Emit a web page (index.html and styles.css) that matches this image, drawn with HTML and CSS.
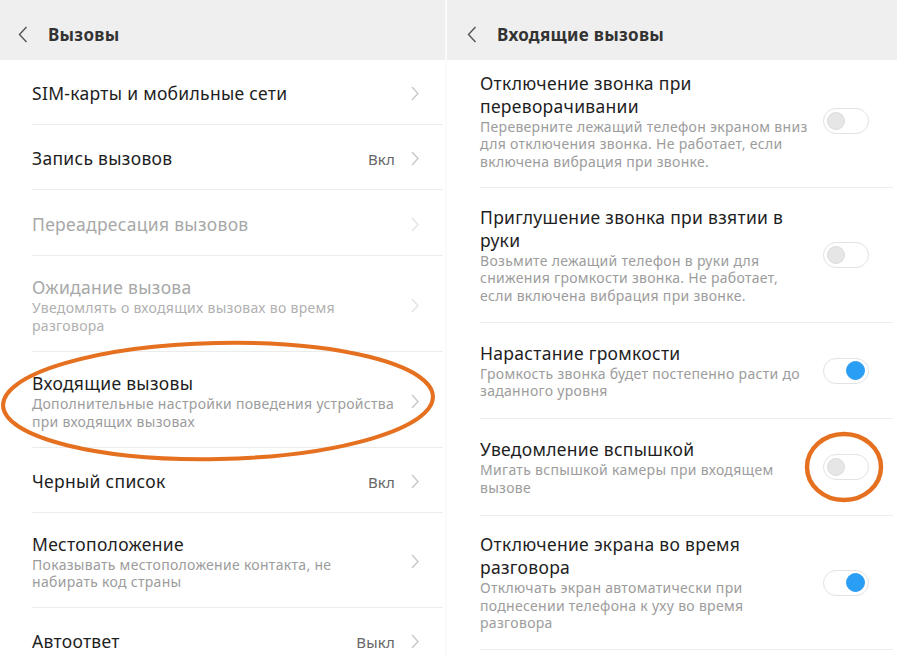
FILE: index.html
```
<!DOCTYPE html>
<html lang="ru">
<head>
<meta charset="utf-8">
<title>Вызовы</title>
<link rel="stylesheet" href="styles.css">
</head>
<body>
<div class="screen">
  <section class="panel panel-left">
    <header class="bar">
      <svg class="back" width="10" height="17" viewBox="0 0 10 17"><path d="M8.5 1 L1.5 8.5 L8.5 16" fill="none" stroke="#555" stroke-width="1.4"/></svg>
      <h1 class="bar-title">Вызовы</h1>
    </header>
    <ul class="list">
      <li class="row h65"><div class="text"><div class="title">SIM-карты и мобильные сети</div></div><svg class="chev" width="8" height="15" viewBox="0 0 8 15"><path d="M1 1 L7 7.5 L1 14" fill="none" stroke="#c6c6c6" stroke-width="1.3"/></svg></li>
      <li class="row h65"><div class="text"><div class="title">Запись вызовов</div></div><span class="value">Вкл</span><svg class="chev" width="8" height="15" viewBox="0 0 8 15"><path d="M1 1 L7 7.5 L1 14" fill="none" stroke="#c6c6c6" stroke-width="1.3"/></svg></li>
      <li class="row h66 disabled"><div class="text"><div class="title">Переадресация вызовов</div></div><svg class="chev" width="8" height="15" viewBox="0 0 8 15"><path d="M1 1 L7 7.5 L1 14" fill="none" stroke="#e2e2e2" stroke-width="1.3"/></svg></li>
      <li class="row h96 disabled"><div class="text"><div class="title">Ожидание вызова</div><div class="sub">Уведомлять о входящих вызовах во время разговора</div></div><svg class="chev" width="8" height="15" viewBox="0 0 8 15"><path d="M1 1 L7 7.5 L1 14" fill="none" stroke="#e2e2e2" stroke-width="1.3"/></svg></li>
      <li class="row h96"><div class="text"><div class="title">Входящие вызовы</div><div class="sub">Дополнительные настройки поведения устройства при входящих вызовах</div></div><svg class="chev" width="8" height="15" viewBox="0 0 8 15"><path d="M1 1 L7 7.5 L1 14" fill="none" stroke="#c6c6c6" stroke-width="1.3"/></svg></li>
      <li class="row h65"><div class="text"><div class="title">Черный список</div></div><span class="value">Вкл</span><svg class="chev" width="8" height="15" viewBox="0 0 8 15"><path d="M1 1 L7 7.5 L1 14" fill="none" stroke="#c6c6c6" stroke-width="1.3"/></svg></li>
      <li class="row h95"><div class="text"><div class="title">Местоположение</div><div class="sub">Показывать местоположение контакта, не набирать код страны</div></div><svg class="chev" width="8" height="15" viewBox="0 0 8 15"><path d="M1 1 L7 7.5 L1 14" fill="none" stroke="#c6c6c6" stroke-width="1.3"/></svg></li>
      <li class="row h65"><div class="text"><div class="title">Автоответ</div></div><span class="value">Выкл</span><svg class="chev" width="8" height="15" viewBox="0 0 8 15"><path d="M1 1 L7 7.5 L1 14" fill="none" stroke="#c6c6c6" stroke-width="1.3"/></svg></li>
    </ul>
  </section>
  <div class="sep"></div>
  <section class="panel panel-right">
    <header class="bar">
      <svg class="back" width="10" height="17" viewBox="0 0 10 17"><path d="M8.5 1 L1.5 8.5 L8.5 16" fill="none" stroke="#555" stroke-width="1.4"/></svg>
      <h1 class="bar-title">Входящие вызовы</h1>
    </header>
    <ul class="list">
      <li class="row h128 lift"><div class="text"><div class="title">Отключение звонка при переворачивании</div><div class="sub">Переверните лежащий телефон экраном вниз для отключения звонка. Не работает, если включена вибрация при звонке.</div></div><span class="toggle"><span class="knob"></span></span></li>
      <li class="row h135"><div class="text"><div class="title">Приглушение звонка при взятии в руки</div><div class="sub">Возьмите лежащий телефон в руки для снижения громкости звонка. Не работает, если включена вибрация при звонке.</div></div><span class="toggle"><span class="knob"></span></span></li>
      <li class="row h96"><div class="text"><div class="title">Нарастание громкости</div><div class="sub">Громкость звонка будет постепенно расти до заданного уровня</div></div><span class="toggle on"><span class="knob"></span></span></li>
      <li class="row h97"><div class="text"><div class="title">Уведомление вспышкой</div><div class="sub">Мигать вспышкой камеры при входящем вызове</div></div><span class="toggle"><span class="knob"></span></span></li>
      <li class="row h134"><div class="text"><div class="title">Отключение экрана во время разговора</div><div class="sub">Отключать экран автоматически при поднесении телефона к уху во время разговора</div></div><span class="toggle on"><span class="knob"></span></span></li>
    </ul>
  </section>
  <svg class="mark mark-left" width="442" height="132" viewBox="0 0 442 132"><ellipse cx="218" cy="66" rx="215" ry="58" transform="rotate(-1.2 218 66)" fill="none" stroke="#e5701f" stroke-width="4"/></svg>
  <svg class="mark mark-right" width="84" height="76" viewBox="0 0 84 76"><ellipse cx="42" cy="38" rx="37" ry="33" fill="none" stroke="#e5701f" stroke-width="4.5"/></svg>
</div>
</body>
</html>
```
FILE: styles.css
```
* { box-sizing: border-box; }
html, body { margin: 0; padding: 0; }
body {
  width: 897px;
  height: 656px;
  overflow: hidden;
  background: #fff;
  font-family: "Noto Sans", Roboto, "Liberation Sans", sans-serif;
}
.screen {
  position: relative;
  display: flex;
  width: 897px;
  height: 656px;
  overflow: hidden;
}
.panel { background: #fff; overflow: hidden; }
.panel-left { width: 445px; }
.panel-right { width: 450px; }
.sep { width: 2px; background: #fafafa; }
.bar {
  height: 60px;
  background: #efefef;
  display: flex;
  align-items: center;
  padding-top: 8px;
  padding-left: 18px;
  gap: 20px;
}
.panel-right .bar { padding-left: 20px; gap: 20px; }
.back { display: block; }
.bar-title {
  margin: 0;
  font-size: 17px;
  font-weight: 700;
  letter-spacing: 0.3px;
  color: #333;
}
.list { list-style: none; margin: 0; padding: 0; }
.row {
  display: flex;
  align-items: center;
  margin-left: 32px;
  margin-right: 2px;
  padding-top: 3px;
  padding-right: 24px;
  border-bottom: 1px solid #ececec;
}
.panel-right .row { margin-left: 33px; margin-right: 4px; padding-right: 24px; padding-top: 0; }
.panel-right .row.lift { padding-bottom: 5px; }
.h65 { height: 65px; }
.h66 { height: 66px; }
.h95 { height: 95px; }
.h96 { height: 96px; }
.h97 { height: 97px; }
.h128 { height: 128px; }
.h134 { height: 134px; }
.h135 { height: 135px; }
.text { flex: 1; min-width: 0; }
.title {
  font-size: 17.5px;
  line-height: 23px;
  letter-spacing: 0.3px;
  color: #1e1e1e;
}
.sub {
  font-size: 14px;
  line-height: 17.5px;
  letter-spacing: 0.3px;
  color: #9c9c9c;
  max-width: 365px;
}
.panel-right .sub { max-width: 331px; }
.panel-right .title { max-width: 312px; }
.disabled .title { color: #a8a8a8; }
.disabled .sub { color: #b0b0b0; }
.value {
  font-size: 15px;
  letter-spacing: 0.2px;
  color: #666;
  margin-right: 16px;
}
.chev { display: block; flex: none; }
.toggle {
  flex: none;
  width: 46px;
  height: 26px;
  margin-left: 10px;
  border: 1px solid #e3e3e3;
  border-radius: 13px;
  background: #fff;
  display: flex;
  align-items: center;
  padding: 0 3px;
}
.knob {
  width: 18px;
  height: 18px;
  border-radius: 50%;
  background: #e6e6e6;
  border: 1px solid #dcdcdc;
}
.toggle.on { justify-content: flex-end; }
.toggle.on .knob { background: #2a9df4; border-color: #2a9df4; width: 19px; height: 19px; }
.mark { position: absolute; }
.mark-left { left: 0; top: 335px; }
.mark-right { left: 802px; top: 429px; }
```
